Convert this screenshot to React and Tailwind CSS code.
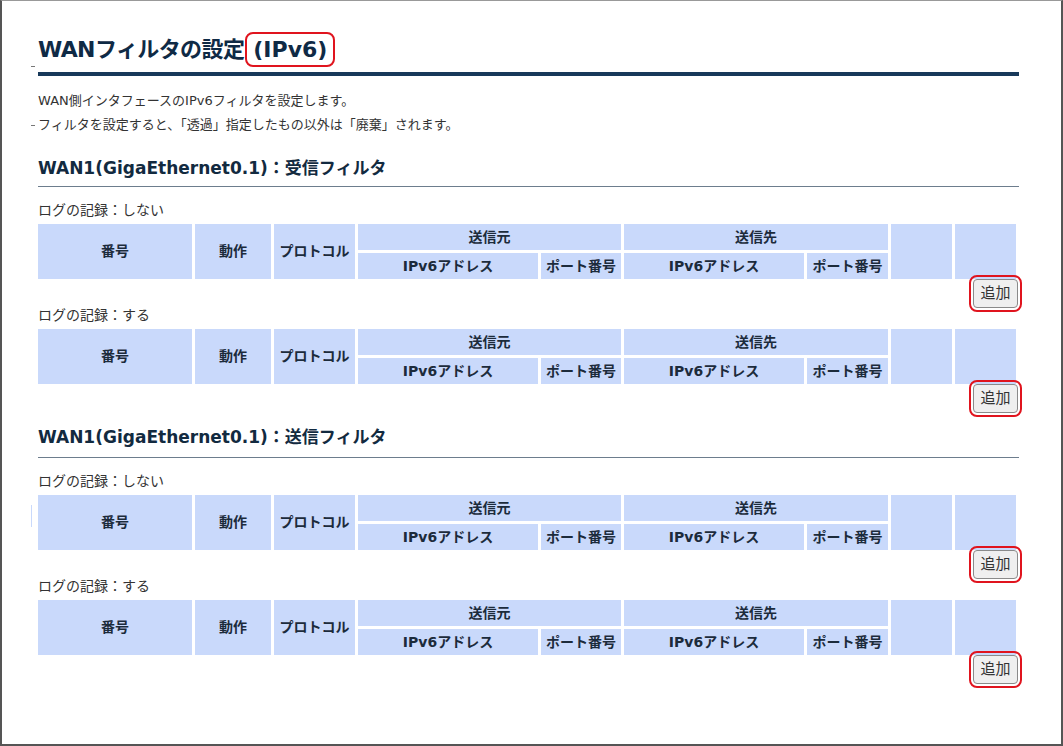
const font = { fontFamily: '"DejaVu Sans", "Noto Sans CJK JP", sans-serif' };

function AddButton() {
  return (
    <div className="flex justify-end h-[29px]">
      <button className="w-[45px] h-[29px] mr-[1px] bg-[#efefef] border border-[#8a8a8a] text-[15px] text-[#333] outline-2 outline-[#e0141e] outline-offset-[2px] rounded-[4px]">
        追加
      </button>
    </div>
  );
}

function FilterTable() {
  const cell = 'bg-[#c9d9fb] flex items-center justify-center text-[14px] font-bold text-[#1c2b3b]';
  return (
    <div className="grid grid-cols-[154px_76px_81px_180px_80px_180px_81px_61px_61px] grid-rows-[26px_26px] gap-[3px] w-[978px]">
      <div className={`${cell} row-span-2`}>番号</div>
      <div className={`${cell} row-span-2`}>動作</div>
      <div className={`${cell} row-span-2`}>プロトコル</div>
      <div className={`${cell} col-span-2`}>送信元</div>
      <div className={`${cell} col-span-2`}>送信先</div>
      <div className={`${cell} row-span-2`}></div>
      <div className={`${cell} row-span-2`}></div>
      <div className={cell}>IPv6アドレス</div>
      <div className={cell}>ポート番号</div>
      <div className={cell}>IPv6アドレス</div>
      <div className={cell}>ポート番号</div>
    </div>
  );
}

function LogBlock({ label, className }) {
  return (
    <div className={className}>
      <div className="text-[14px] leading-[14px] text-[#333]">ログの記録：{label}</div>
      <div className="mt-[7px]">
        <FilterTable />
      </div>
      <AddButton />
    </div>
  );
}

function Section({ title, className, lineGap }) {
  return (
    <div className={className}>
      <h2 className={`text-[17px] leading-[24px] font-bold text-[#122a40] border-b border-[#6d7d8d] ${lineGap}`}>
        {title}
      </h2>
      <LogBlock label="しない" className="mt-[16px]" />
      <LogBlock label="する" />
    </div>
  );
}

export default function App() {
  return (
    <div
      className="w-[1063px] h-[746px] bg-white border-2 border-t border-[#555] border-t-[#999] overflow-hidden"
      style={font}
    >
      <div className="pl-[36px] pr-[42px] pt-[34px]">
        <div className="relative">
          <h1 className="text-[22px] leading-[30px] font-bold text-[#0f2a45] pb-[7px] border-b-[4px] border-[#18395a]">
            <span className="tracking-[-0.6px]">WANフィルタの設定</span>
            <span className="ml-[1px] border-2 border-[#e0141e] rounded-[8px] px-[6px] py-[3px]">(IPv6)</span>
          </h1>
          <div className="absolute left-[-7px] top-[31px] w-[4px] h-[1px] bg-[#777]"></div>
        </div>

        <div className="relative mt-[13px] text-[13px] leading-[24px] text-[#333]">
          <p>WAN側インタフェースのIPv6フィルタを設定します。</p>
          <p>フィルタを設定すると、「透過」指定したもの以外は「廃棄」されます。</p>
          <div className="absolute left-[-7px] top-[36px] w-[4px] h-[1px] bg-[#777]"></div>
        </div>

        <Section title="WAN1(GigaEthernet0.1)：受信フィルタ" className="mt-[19px]" lineGap="pb-[6px]" />
        <div className="relative">
          <Section title="WAN1(GigaEthernet0.1)：送信フィルタ" className="mt-[12px]" lineGap="pb-[8px]" />
          <div className="absolute left-[-7px] top-[80px] w-[1px] h-[22px] bg-[#c9d9fb]"></div>
        </div>
      </div>
    </div>
  );
}
